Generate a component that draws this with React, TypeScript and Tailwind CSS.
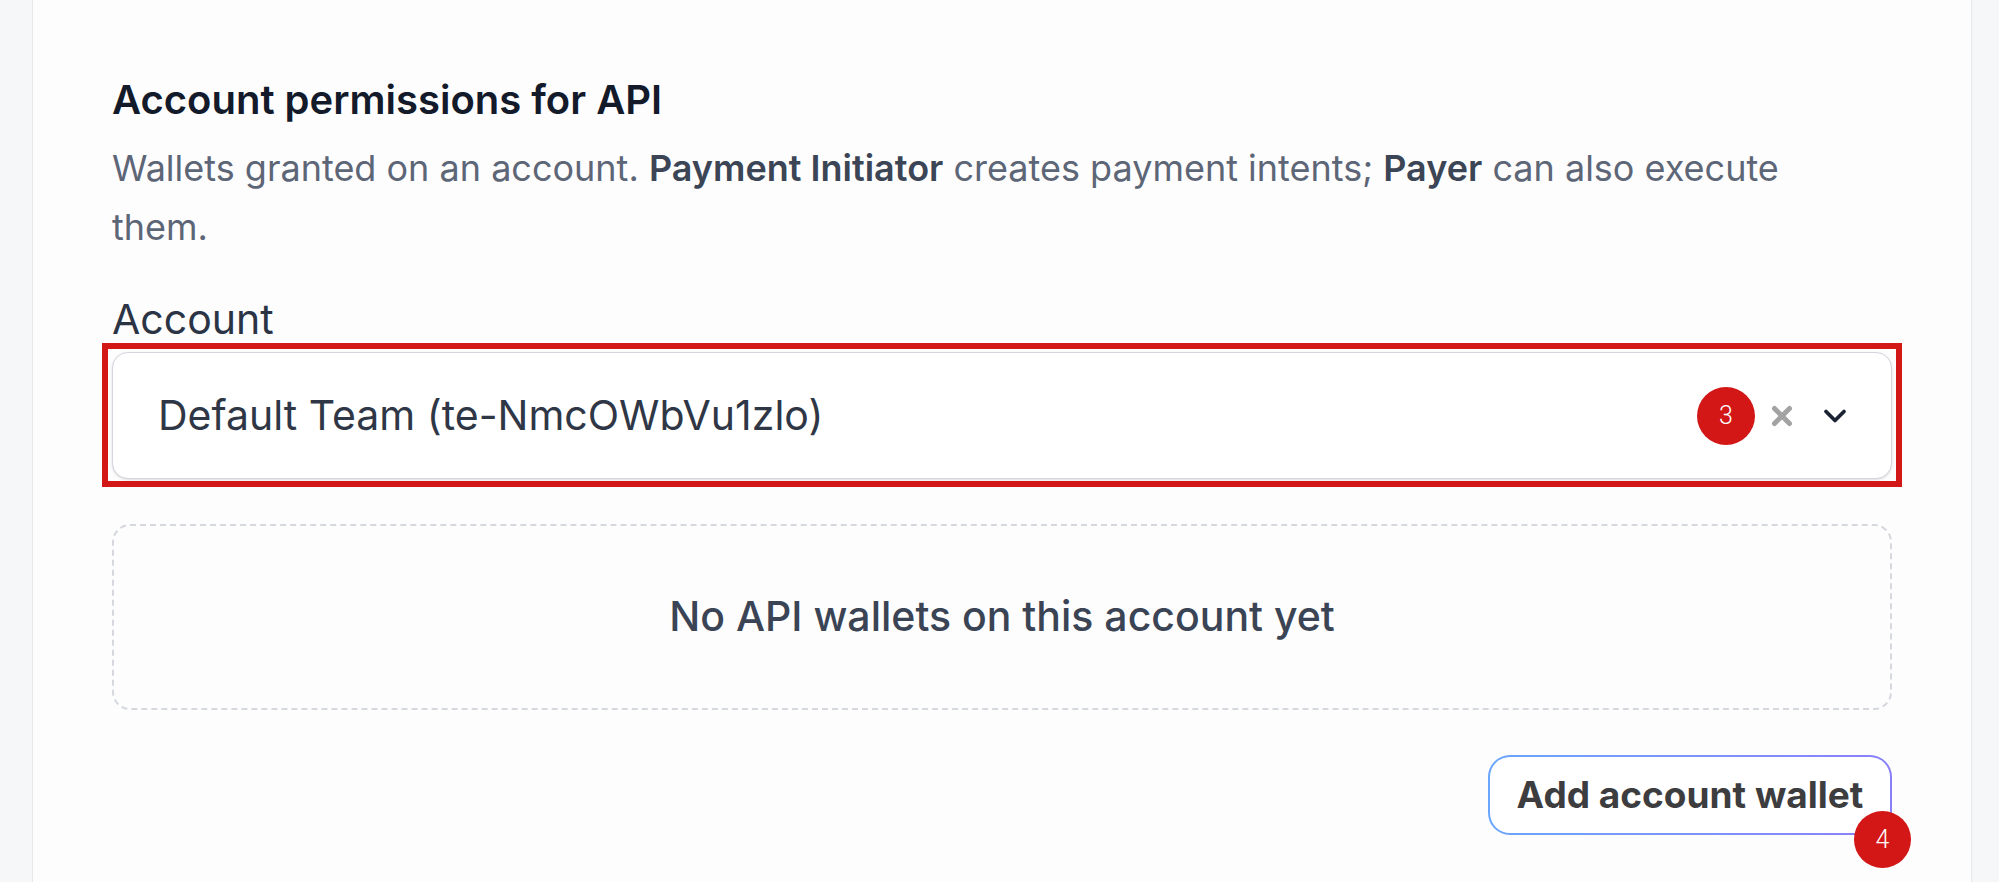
import { X, ChevronDown } from "lucide-react";

function Badge({ n }: { n: string }) {
  return (
    <span className="flex h-[58px] w-[58px] items-center justify-center rounded-full bg-[#d31616] text-[25px] font-light text-white font-['Roboto',sans-serif]">
      {n}
    </span>
  );
}

export default function App() {
  return (
    <div className="h-[882px] w-full overflow-hidden bg-[#f6f7f9] pl-[32px] font-['Inter',sans-serif]">
      <div className="h-full w-[1940px] border-x border-[#e6e8ec] bg-[#fdfdfe] px-[79px] pt-[76px]">
        <h2 className="text-[40px] leading-[48px] font-semibold text-[#131a2a]">
          Account permissions for API
        </h2>
        <p className="mt-[15px] max-w-[1740px] text-[36px] leading-[59px] text-[#5d6676]">
          Wallets granted on an account.{" "}
          <span className="font-semibold text-[#3b4555]">Payment Initiator</span>{" "}
          creates payment intents;{" "}
          <span className="font-semibold text-[#3b4555]">Payer</span> can also
          execute them.
        </p>

        <label className="mt-[38px] block text-[41px] leading-[48px] text-[#2b3444]">
          Account
        </label>

        <div className="relative mt-[9px]">
          <div className="flex h-[127px] items-center rounded-[16px] border border-[#d3d6dc] bg-white pl-[45px] pr-[38px] shadow-sm">
            <span className="flex-1 text-[41px] text-[#2f3746]">
              Default Team (te-NmcOWbVu1zlo)
            </span>
            <div className="flex items-center gap-[12px]">
              <Badge n="3" />
              <X className="h-[30px] w-[30px] text-[#a3a3a3]" strokeWidth={4} />
              <ChevronDown className="ml-[8px] h-[36px] w-[36px] text-[#1b2333]" strokeWidth={2.5} />
            </div>
          </div>
          <div className="pointer-events-none absolute -top-[9px] -left-[10px] -right-[10px] -bottom-[8px] border-[6px] border-[#d31616]" />
        </div>

        <div className="mt-[45px] flex h-[186px] items-center justify-center rounded-[18px] border-2 border-dashed border-[#d5d8de]">
          <span className="text-[41px] font-medium text-[#3a4454]">
            No API wallets on this account yet
          </span>
        </div>

        <div className="mt-[45px] flex justify-end">
          <div className="relative rounded-[22px] bg-gradient-to-r from-[#6aa6fb] to-[#8a7ff8] p-[2px]">
            <button className="h-[76px] w-[400px] rounded-[20px] bg-white text-[37px] font-bold text-[#3d3d3f]">
              Add account wallet
            </button>
            <div className="absolute -right-[19px] -bottom-[33px]">
              <span className="flex h-[57px] w-[57px] items-center justify-center rounded-full bg-[#d31616] text-[25px] font-light text-white font-['Roboto',sans-serif]">
                4
              </span>
            </div>
          </div>
        </div>
      </div>
    </div>
  );
}
